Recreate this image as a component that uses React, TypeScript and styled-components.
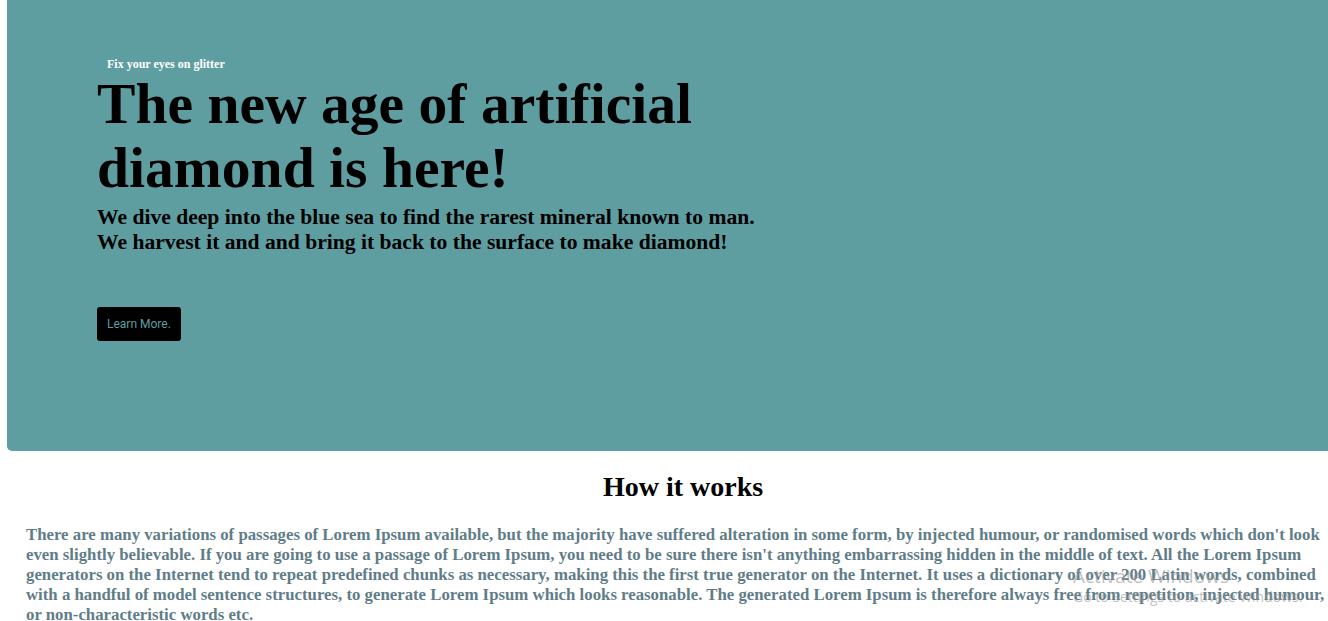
import styled, { createGlobalStyle } from 'styled-components';

const GlobalStyle = createGlobalStyle`
    html, body {
        margin: 0;
        padding: 0;
        background: #ffffff;
        overflow: hidden;
    }
    body {
        font-family: "Liberation Serif", "Times New Roman", serif;
    }
`;

const Page = styled.div`
    position: relative;
    width: 1328px;
    height: 621px;
    overflow: hidden;
`;

const Hero = styled.section`
    background: #5f9ea0;
    margin-left: 7px;
    height: 451px;
    border-bottom-left-radius: 5px;
    padding: 57px 0 0 90px;
    box-sizing: border-box;
    display: flex;
    flex-direction: column;
    align-items: flex-start;
`;

const Tagline = styled.span`
    color: #ffffff;
    font-size: 12px;
    font-weight: bold;
    padding-left: 10px;
`;

const Headline = styled.h1`
    margin: 0;
    font-size: 57.6px;
    line-height: 64px;
    font-weight: bold;
    color: #000000;
    max-width: 660px;
`;

const Lead = styled.h3`
    margin: 5px 0 0;
    font-size: 21.6px;
    line-height: 25px;
    font-weight: bold;
    color: #000000;
`;

const LearnButton = styled.button`
    margin-top: 52px;
    background: #000000;
    color: #5f9ea0;
    border: none;
    border-radius: 3px;
    height: 34px;
    padding: 0 10px;
    font-family: Roboto, "Liberation Sans", Arial, sans-serif;
    font-size: 12px;
    cursor: pointer;
`;

const HowSection = styled.section`
    display: flex;
    flex-direction: column;
    align-items: center;
    padding-top: 20px;
`;

const SectionTitle = styled.h2`
    margin: 0 0 0 38px;
    font-size: 28px;
    line-height: 32px;
    font-weight: bold;
    color: #000000;
`;

const Body = styled.p`
    margin: 22px 0 0;
    padding-left: 26px;
    font-size: 16.8px;
    line-height: 20px;
    font-weight: bold;
    color: #5f7d88;
`;

// OS watermark that sits over the page
const Watermark = styled.div`
    position: absolute;
    left: 1073px;
    top: 564px;
    font-family: "Open Sans", "Noto Sans", sans-serif;
    color: rgba(150, 150, 150, 0.6);
    pointer-events: none;
`;

const WatermarkTitle = styled.div`
    font-size: 19px;
    line-height: 24px;
`;

const WatermarkNote = styled.div`
    font-size: 14px;
    line-height: 18px;
`;

export default function App() {
    return (
        <Page>
            <GlobalStyle />
            <Hero>
                <Tagline>Fix your eyes on glitter</Tagline>
                <Headline>The new age of artificial diamond is here!</Headline>
                <Lead>
                    We dive deep into the blue sea to find the rarest mineral known to man.
                    <br />
                    We harvest it and and bring it back to the surface to make diamond!
                </Lead>
                <LearnButton>Learn More.</LearnButton>
            </Hero>
            <HowSection>
                <SectionTitle>How it works</SectionTitle>
                <Body>
                    There are many variations of passages of Lorem Ipsum available, but the majority have suffered alteration in some form, by injected humour, or randomised words which don't look even slightly believable. If you are going to use a passage of Lorem Ipsum, you need to be sure there isn't anything embarrassing hidden in the middle of text. All the Lorem Ipsum generators on the Internet tend to repeat predefined chunks as necessary, making this the first true generator on the Internet. It uses a dictionary of over 200 Latin words, combined with a handful of model sentence structures, to generate Lorem Ipsum which looks reasonable. The generated Lorem Ipsum is therefore always free from repetition, injected humour, or non-characteristic words etc.
                </Body>
            </HowSection>
            <Watermark>
                <WatermarkTitle>Activate Windows</WatermarkTitle>
                <WatermarkNote>Go to Settings to activate Windows.</WatermarkNote>
            </Watermark>
        </Page>
    );
}
